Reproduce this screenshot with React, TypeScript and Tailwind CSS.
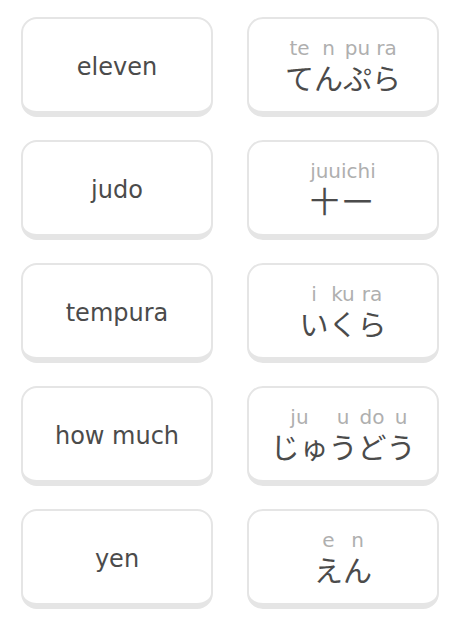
const pairs = [
  { en: "eleven", jp: [["te", "て"], ["n", "ん"], ["pu", "ぷ"], ["ra", "ら"]] },
  { en: "judo", jp: [["juuichi", "十一"]] },
  { en: "tempura", jp: [["i", "い"], ["ku", "く"], ["ra", "ら"]] },
  { en: "how much", jp: [["ju", "じゅ"], ["u", "う"], ["do", "ど"], ["u", "う"]] },
  { en: "yen", jp: [["e", "え"], ["n", "ん"]] },
];

const Card = ({ children }: { children: React.ReactNode }) => (
  <div className="h-[100px] rounded-[16px] border-2 border-b-[6px] border-[#e5e5e5] bg-white flex flex-col items-center justify-center">
    {children}
  </div>
);

export default function App() {
  return (
    <div
      className="w-[459px] h-[635px] bg-white pt-[17px] pl-[21px] pr-[20px]"
      style={{ fontFamily: '"DejaVu Sans", "Noto Sans CJK JP", sans-serif' }}
    >
      <div className="grid grid-cols-2 gap-x-[34px] gap-y-[23px]">
        {pairs.map((p, i) => (
          <>
            <Card key={"en" + i}>
              <span className="text-[24px] leading-[24px] text-[#4b4b4b] pt-[4px]">{p.en}</span>
            </Card>
            <Card key={"jp" + i}>
              <div className="flex items-end pb-[3px]">
                {p.jp.map(([romaji, kana], j) => (
                  <div key={j} className="flex flex-col items-center">
                    <span className="text-[20px] leading-[24px] text-[#afafaf] mb-[3px]">{romaji}</span>
                    <span
                      className={
                        "text-[29px] leading-[29px] text-[#4b4b4b] " +
                        (kana === "十一" ? "tracking-[4px]" : "")
                      }
                      style={{ fontFamily: '"Noto Sans CJK JP", sans-serif' }}
                    >
                      {kana}
                    </span>
                  </div>
                ))}
              </div>
            </Card>
          </>
        ))}
      </div>
    </div>
  );
}
